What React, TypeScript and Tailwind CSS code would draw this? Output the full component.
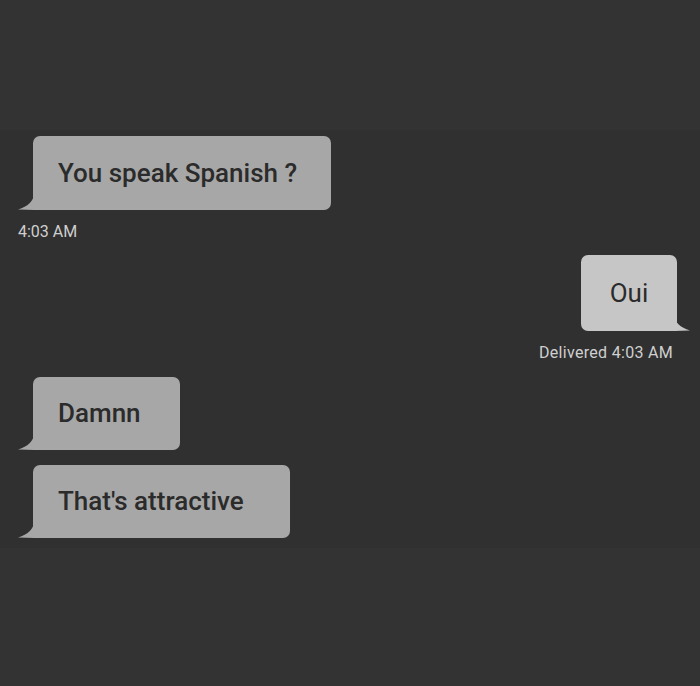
import React from "react";

type Side = "in" | "out";

const Tail: React.FC<{ side: Side; color: string }> = ({ side, color }) => (
  <svg
    width="16"
    height="16"
    viewBox="0 0 16 16"
    className={`absolute bottom-0 ${side === "in" ? "-left-[15px]" : "-right-[13px] -scale-x-100"}`}
  >
    <path d="M16 0 Q15 11 0 15.5 L16 16 Z" fill={color} />
  </svg>
);

const Bubble: React.FC<{
  text: string;
  side: Side;
  width: string;
  height: string;
}> = ({ text, side, width, height }) => {
  const color = side === "in" ? "#a7a7a7" : "#c6c6c6";
  return (
    <div
      className={`relative flex items-center ${width} ${height} ${
        side === "in"
          ? "bg-[#a7a7a7] rounded-t-[7px] rounded-br-[7px] pl-[25px] font-medium"
          : "bg-[#c6c6c6] rounded-t-[7px] rounded-bl-[7px] justify-center font-normal"
      } text-[26px] text-[#2b2b2b]`}
    >
      {text}
      <Tail side={side} color={color} />
    </div>
  );
};

export default function App() {
  return (
    <div
      className="w-[700px] h-[686px] bg-[#333333] flex flex-col"
      style={{ fontFamily: "Roboto, 'Liberation Sans', sans-serif" }}
    >
      <div className="h-[130px]" />
      <div className="h-[418px] bg-[#303030] flex flex-col">
        {/* incoming */}
        <div className="pt-[6px] pl-[33px]">
          <Bubble text="You speak Spanish ?" side="in" width="w-[298px]" height="h-[74px]" />
        </div>
        <div className="pl-[18px] mt-[13px] text-[16px] leading-[18px] text-[#cfcfcf]">4:03 AM</div>

        {/* outgoing */}
        <div className="mt-[14px] flex justify-end pr-[23px]">
          <Bubble text="Oui" side="out" width="w-[96px]" height="h-[76px]" />
        </div>
        <div className="mt-[13px] pr-[27px] text-right text-[16px] leading-[18px] tracking-[0.3px] text-[#cfcfcf]">
          Delivered 4:03 AM
        </div>

        {/* incoming */}
        <div className="mt-[15px] pl-[33px] flex flex-col gap-[15px]">
          <Bubble text="Damnn" side="in" width="w-[147px]" height="h-[73px]" />
          <Bubble text="That's attractive" side="in" width="w-[257px]" height="h-[73px]" />
        </div>
      </div>
    </div>
  );
}
